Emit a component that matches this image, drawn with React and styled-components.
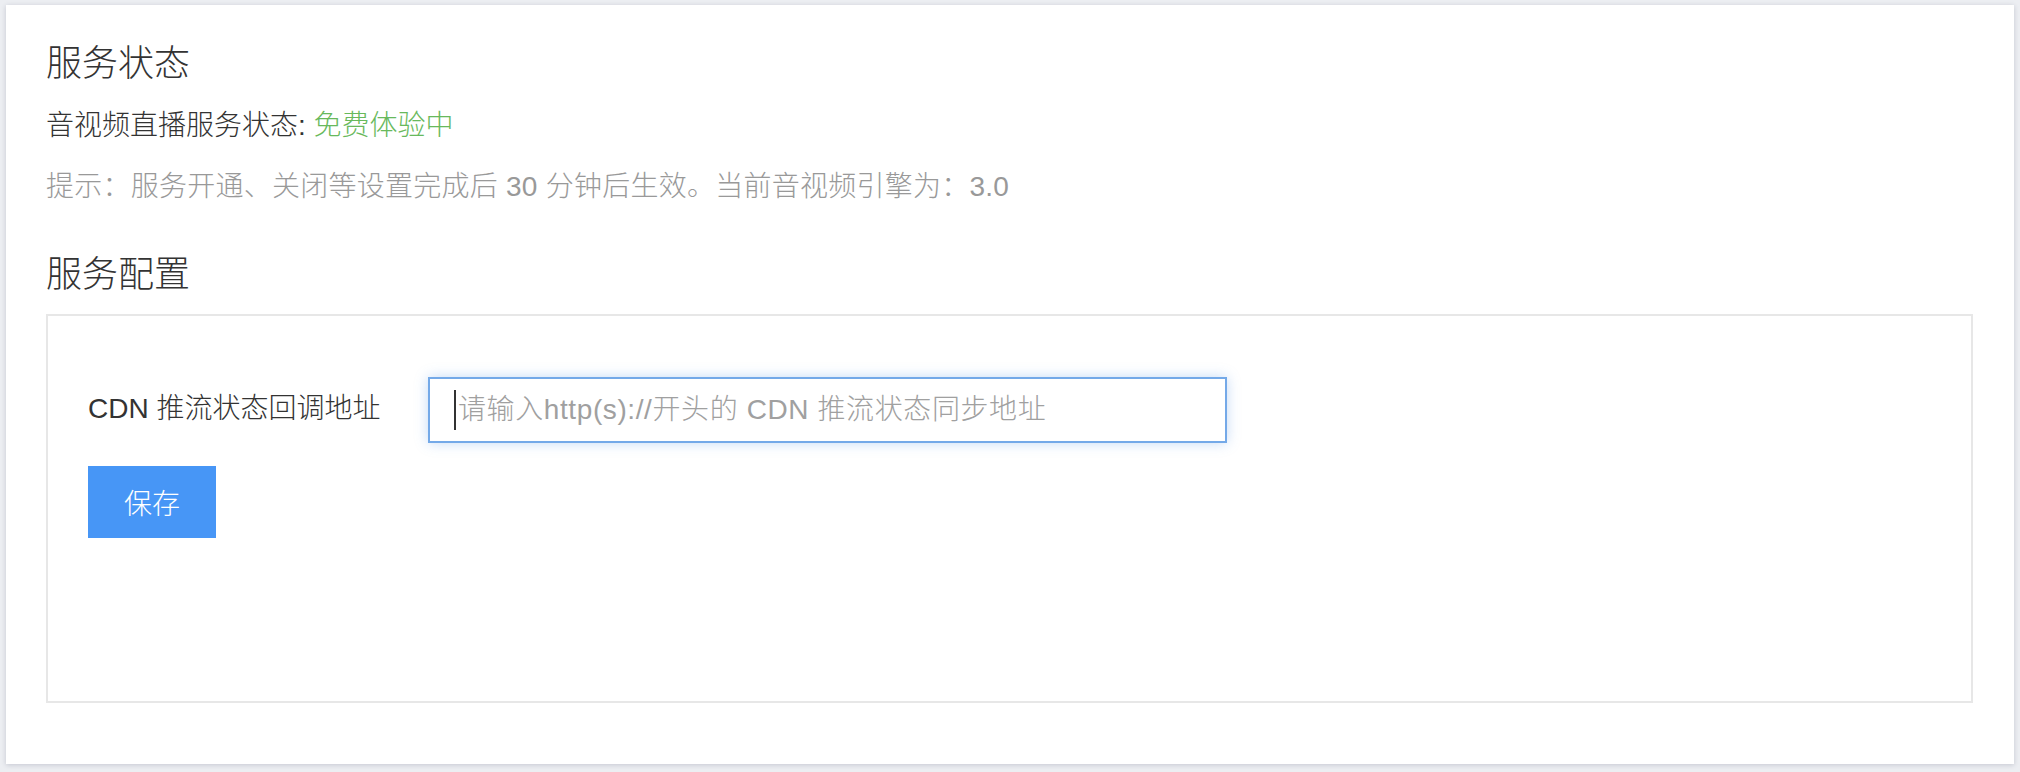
import styled, { createGlobalStyle } from "styled-components";

const GlobalStyle = createGlobalStyle`
  body {
    margin: 0;
    background: #eceef2;
    font-family: "Liberation Sans", "Noto Sans CJK SC", sans-serif;
  }
`;

const Page = styled.div`
  padding: 5px 6px 8px;
`;

const Card = styled.div`
  background: #fff;
  box-shadow: 0 1px 5px rgba(20, 30, 60, 0.18);
  padding: 34px 41px 61px 40px;
`;

const Title = styled.h2`
  margin: ${(p) => p.$top || 0}px 0 0;
  font-size: 36px;
  font-weight: 300;
  line-height: 50px;
  color: #333;
`;

const Line = styled.p`
  margin: ${(p) => p.$top || 0}px 0 0;
  font-size: 28px;
  font-weight: 300;
  line-height: 40px;
  letter-spacing: ${(p) => (p.$muted ? "0.25px" : "0")};
  color: ${(p) => (p.$muted ? "#999" : "#333")};
`;

const Green = styled.span`
  color: #68b95c;
`;

const ConfigBox = styled.div`
  margin-top: 14px;
  border: 2px solid #e7e7e7;
  padding: 61px 40px 163px;
`;

const FormRow = styled.div`
  display: flex;
  align-items: center;
`;

const Label = styled.label`
  width: 340px;
  flex-shrink: 0;
  font-size: 28px;
  font-weight: 300;
  color: #333;
  margin-top: -8px;
`;

const InputWrap = styled.div`
  position: relative;

  /* the text caret of the focused field */
  &::before {
    content: "";
    position: absolute;
    left: 26px;
    top: 13px;
    width: 2px;
    height: 40px;
    background: #333;
  }
`;

const Input = styled.input`
  display: block;
  box-sizing: border-box;
  width: 799px;
  height: 66px;
  padding: 0 24px 0 28px;
  border: 2px solid #74a9e8;
  outline: none;
  box-shadow: 0 0 12px rgba(90, 150, 230, 0.35);
  font-family: inherit;
  font-size: 28px;
  font-weight: 300;
  letter-spacing: 0.6px;
  color: #333;
  caret-color: transparent;

  &::placeholder {
    color: #a0a0a0;
  }
`;

const SaveButton = styled.button`
  margin-top: 23px;
  width: 128px;
  height: 72px;
  border: none;
  background: #4796f6;
  color: #fff;
  font-family: inherit;
  font-size: 28px;
  font-weight: 300;
  cursor: pointer;
`;

export default function App() {
  return (
    <Page>
      <GlobalStyle />
      <Card>
        <Title>服务状态</Title>
        <Line $top={17}>
          音视频直播服务状态: <Green>免费体验中</Green>
        </Line>
        <Line $top={21} $muted>
          提示：服务开通、关闭等设置完成后 30 分钟后生效。当前音视频引擎为：3.0
        </Line>
        <Title $top={43}>服务配置</Title>
        <ConfigBox>
          <FormRow>
            <Label htmlFor="cdn">CDN 推流状态回调地址</Label>
            <InputWrap>
              <Input
                id="cdn"
                placeholder="请输入http(s)://开头的 CDN 推流状态同步地址"
              />
            </InputWrap>
          </FormRow>
          <SaveButton>保存</SaveButton>
        </ConfigBox>
      </Card>
    </Page>
  );
}
